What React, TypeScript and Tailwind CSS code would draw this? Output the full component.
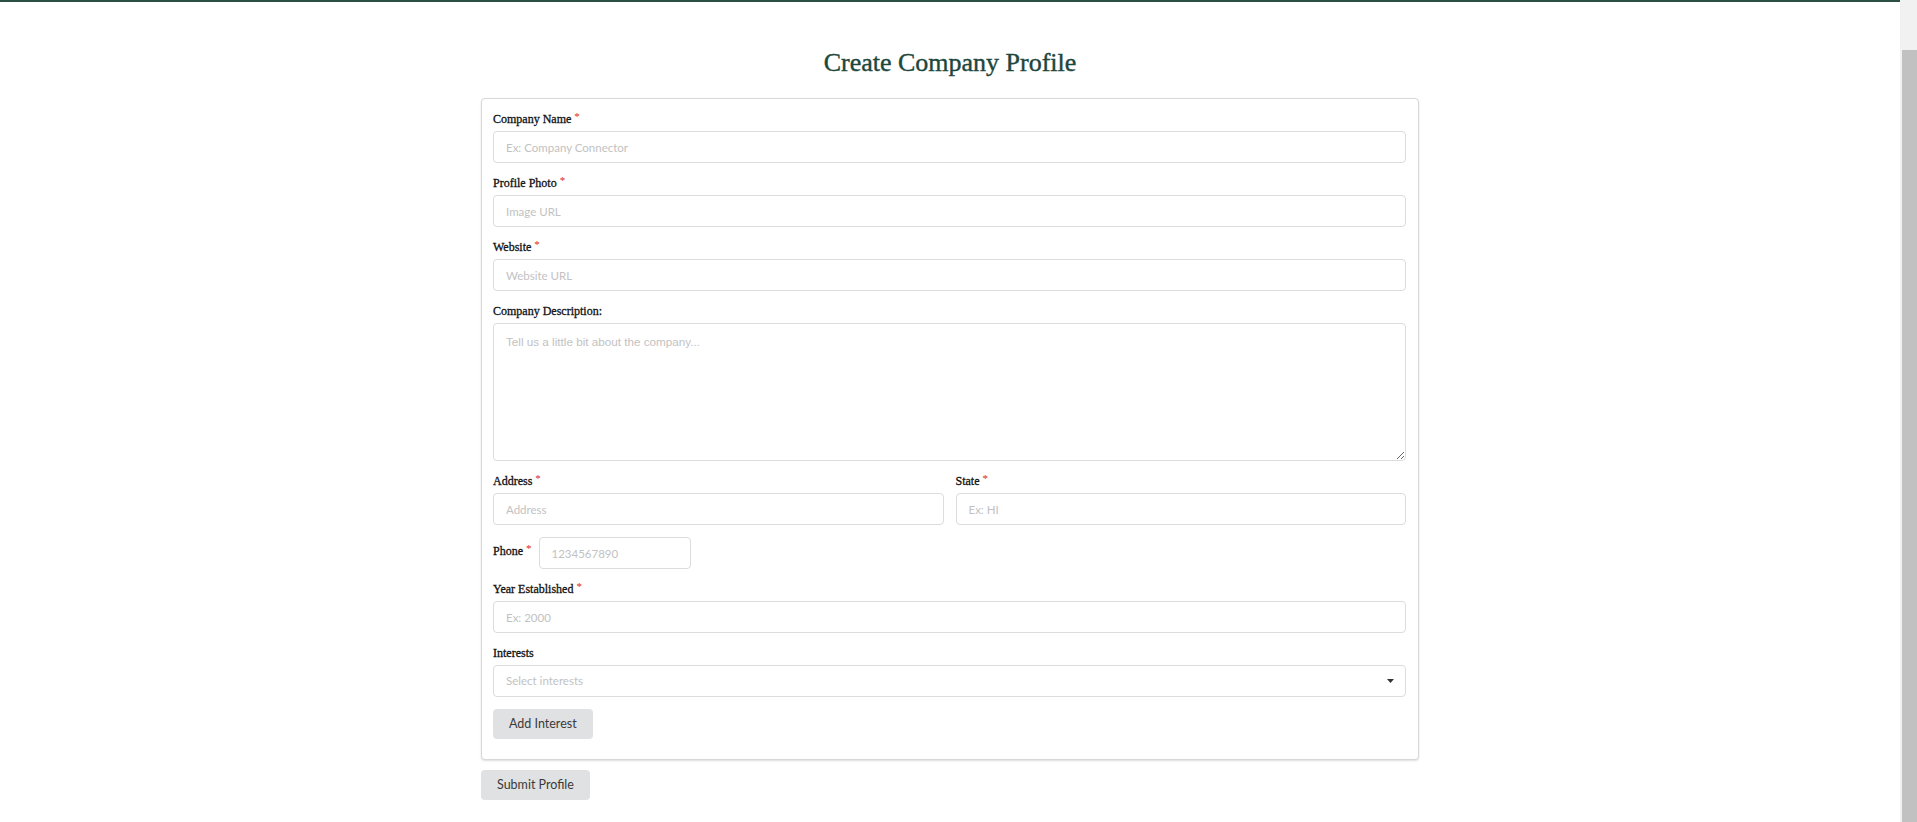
import { type ReactNode } from 'react'

const labelCls =
  "font-['Liberation_Serif',serif] text-[12px] leading-4 text-[#111] [-webkit-text-stroke:0.3px_#111]"
const inputBase =
  "block h-[32px] rounded-[4px] border border-[#dcdcdc] bg-white px-3 font-['Lato',sans-serif] text-[11.5px] text-[#333] placeholder:text-[#c2c2c2] outline-none"
const buttonCls =
  "h-[30px] rounded-[4px] bg-[#e0e1e2] px-[16px] font-['Lato',sans-serif] text-[12.5px] text-[#3a3a3a]"

function Label({ children, required }: { children: ReactNode; required?: boolean }) {
  return (
    <label className={`${labelCls} mb-1 flex items-start`}>
      {children}
      {required && (
        <span className="ml-[3px] -mt-[3px] text-[11px] leading-4 text-[#db2828] [-webkit-text-stroke:0px]">*</span>
      )}
    </label>
  )
}

function Field({ label, placeholder, required }: { label: string; placeholder: string; required?: boolean }) {
  return (
    <div className="mb-3 flex flex-col">
      <Label required={required}>{label}</Label>
      <input className={`${inputBase} w-full`} placeholder={placeholder} />
    </div>
  )
}

export default function App() {
  return (
    <div className="flex h-[822px] overflow-hidden bg-white">
      <div className="flex flex-1 flex-col">
        {/* thin brand bar */}
        <div className="h-[2px] bg-[#2b4f43]" />

        <h1 className="mt-[48px] text-center font-['Liberation_Serif',serif] text-[26px] leading-[26px] text-[#1d473c] [-webkit-text-stroke:0.4px_#1d473c]">
          Create Company Profile
        </h1>

        <div className="mx-auto mt-[22px] w-[938px]">
          <div className="rounded-[4px] border border-[#d8d8d9] bg-white px-3 pt-3 pb-5 pl-[11px] shadow-[0_1px_2px_0_rgba(34,36,38,0.15)]">
            <Field label="Company Name" placeholder="Ex: Company Connector" required />
            <Field label="Profile Photo" placeholder="Image URL" required />
            <Field label="Website" placeholder="Website URL" required />

            <div className="mb-3 flex flex-col">
              <Label>Company Description:</Label>
              <textarea
                className="block h-[138px] w-full rounded-[4px] border border-[#dcdcdc] px-3 py-[9px] font-['Liberation_Sans',Arial,sans-serif] text-[11.7px] text-[#333] placeholder:text-[#c2c2c2] outline-none"
                placeholder="Tell us a little bit about the company..."
              />
            </div>

            <div className="grid grid-cols-2 gap-3">
              <Field label="Address" placeholder="Address" required />
              <Field label="State" placeholder="Ex: HI" required />
            </div>

            <div className="mb-3 flex items-center gap-[7px]">
              <Label required>Phone</Label>
              <input className={`${inputBase} w-[152px]`} placeholder="1234567890" />
            </div>

            <Field label="Year Established" placeholder="Ex: 2000" required />

            <div className="mb-3 flex flex-col">
              <Label>Interests</Label>
              <div className="flex h-[32px] items-center justify-between rounded-[4px] border border-[#dcdcdc] pl-3 pr-[11px] font-['Lato',sans-serif] text-[11.5px] text-[#c2c2c2]">
                <span>Select interests</span>
                <svg width="7" height="4" viewBox="0 0 7 4">
                  <path d="M0 0h7L3.5 4z" fill="#333" />
                </svg>
              </div>
            </div>

            <button type="button" className={buttonCls}>
              Add Interest
            </button>
          </div>

          <button type="button" className={`${buttonCls} mt-[10px]`}>
            Submit Profile
          </button>
        </div>
      </div>

      {/* scrollbar */}
      <div className="flex w-[17px] bg-[#f1f1f1] pl-[2px] pt-[50px]">
        <div className="flex-1 bg-[#c1c1c1]" />
      </div>
    </div>
  )
}
